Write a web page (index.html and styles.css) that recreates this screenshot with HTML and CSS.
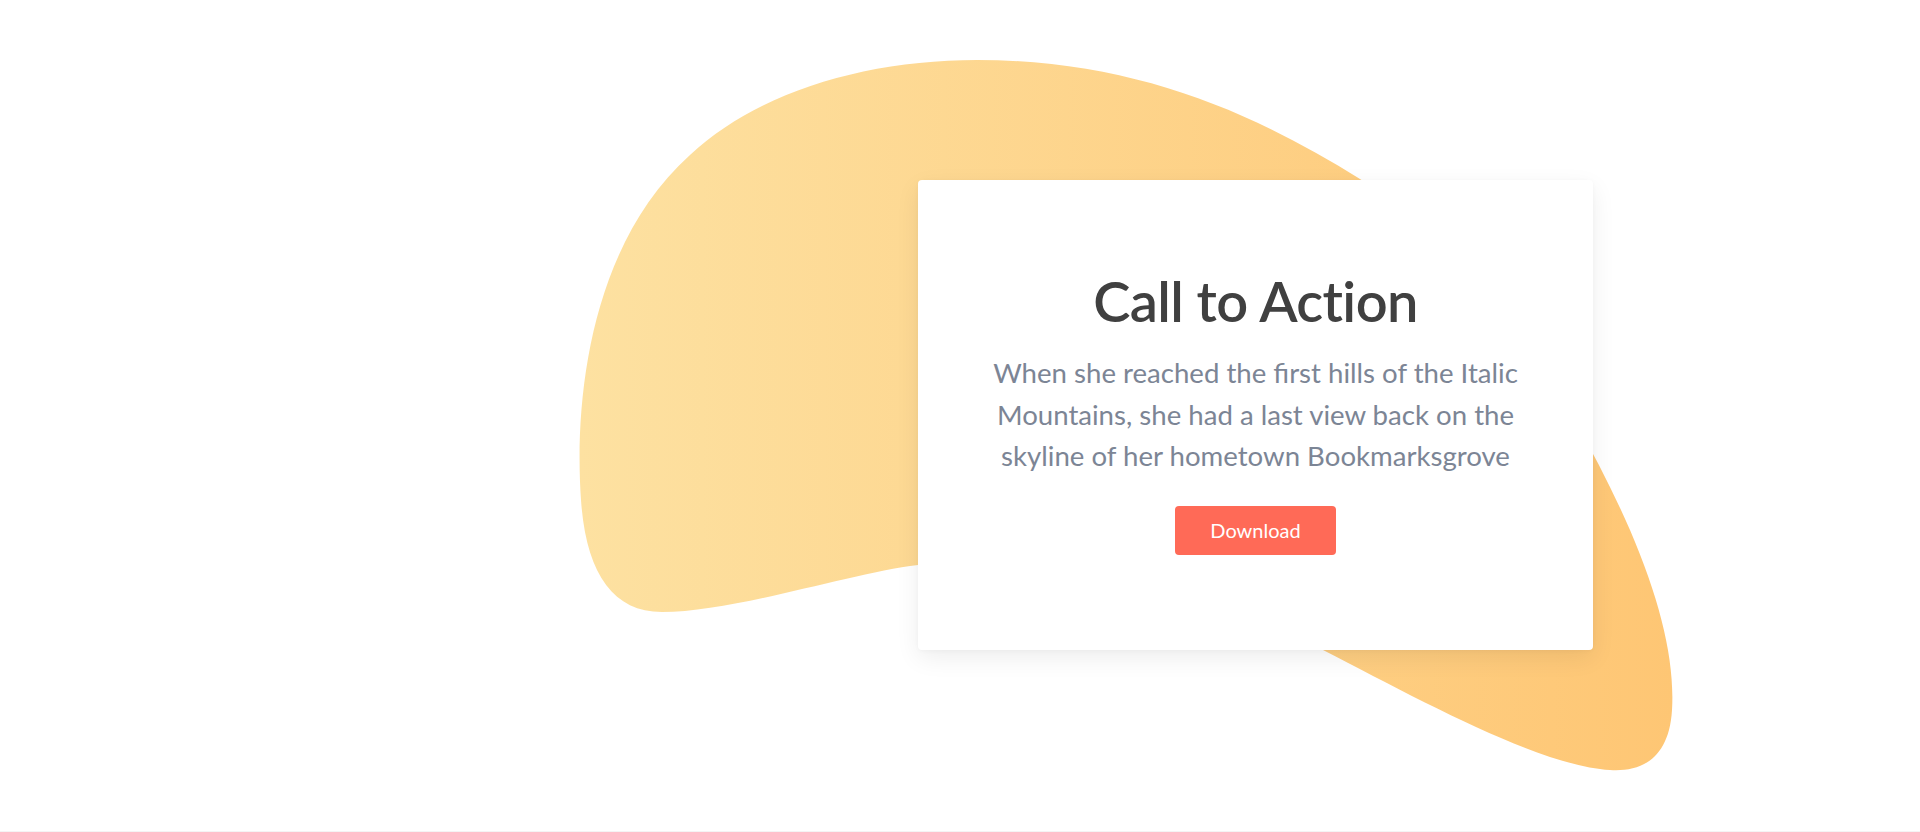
FILE: index.html
```
<!DOCTYPE html>
<html lang="en">
<head>
<meta charset="utf-8">
<title>Call to Action</title>
<link rel="stylesheet" href="styles.css">
</head>
<body>
<section class="hero">
  <svg class="blob" viewBox="0 0 1920 831" aria-hidden="true">
    <defs>
      <linearGradient id="blobGrad" gradientUnits="userSpaceOnUse" x1="580" y1="0" x2="1673" y2="0">
        <stop offset="0" stop-color="#fde1a1"/>
        <stop offset="1" stop-color="#fec674"/>
      </linearGradient>
    </defs>
    <path fill="url(#blobGrad)" d="M 977 60 C 1130 60, 1250 110, 1360 179 C 1460 245, 1560 370, 1630 530 C 1660 600, 1675 660, 1672 710 C 1669 760, 1640 772, 1610 770 C 1540 766, 1420 700, 1323 650 C 1230 602, 1000 555, 918 565 C 850 573, 735 612, 662 612 C 612 612, 586 572, 581 500 C 574 400, 590 245, 690 155 C 758 92, 865 60, 977 60 Z"/>
  </svg>
  <div class="hero-inner">
    <div class="card">
      <h2 class="card-title">Call to Action</h2>
      <p class="card-text">When she reached the first hills of the Italic Mountains, she had a last view back on the skyline of her hometown Bookmarksgrove</p>
      <a class="btn" href="#">Download</a>
    </div>
  </div>
</section>
</body>
</html>
```
FILE: styles.css
```
* { box-sizing: border-box; }
html, body { margin: 0; padding: 0; }
body {
  font-family: Lato, "Noto Sans", sans-serif;
  background: #ffffff;
  overflow: hidden;
}
.hero {
  position: relative;
  height: 832px;
  border-bottom: 1px solid #f4f4f4;
}
.blob {
  position: absolute;
  left: 0;
  top: 0;
  width: 1920px;
  height: 831px;
  z-index: 0;
}
.hero-inner {
  position: relative;
  z-index: 1;
  display: grid;
  grid-template-columns: 918px 675px 1fr;
  padding-top: 180px;
}
.card {
  grid-column: 2;
  background: #fff;
  border-radius: 4px;
  box-shadow: 0 8px 24px rgba(0, 0, 0, 0.07), 0 1px 4px rgba(0, 0, 0, 0.03);
  padding: 87px 50px 95px;
  display: flex;
  flex-direction: column;
  align-items: center;
  text-align: center;
}
.card-title {
  margin: 0 0 18px;
  font-size: 56px;
  line-height: 1.2;
  font-weight: 600;
  letter-spacing: -0.6px;
  color: #404040;
}
.card-text {
  margin: 0 0 29px;
  max-width: 540px;
  font-size: 27.6px;
  line-height: 41.6px;
  font-weight: 400;
  color: #7c8595;
}
.btn {
  display: inline-block;
  background: #ff6a57;
  color: #fff;
  text-decoration: none;
  font-size: 20px;
  line-height: 30px;
  padding: 9.5px 35px;
  border-radius: 4px;
}
```
